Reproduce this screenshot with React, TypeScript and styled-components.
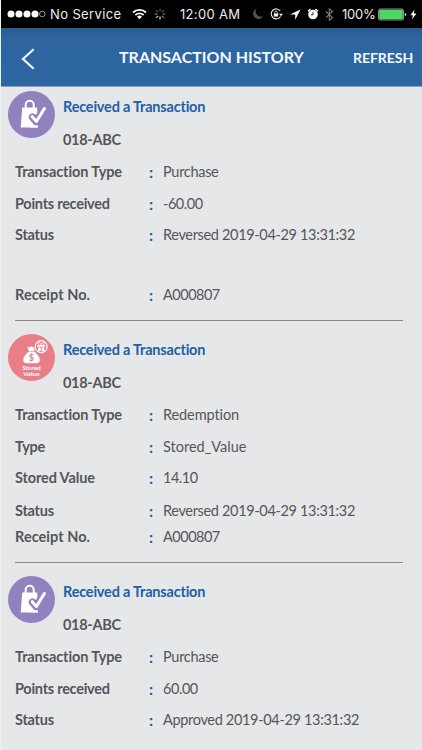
import React from 'react';
import styled, { createGlobalStyle } from 'styled-components';

const Global = createGlobalStyle`
  * { box-sizing: border-box; }
  body { margin: 0; background: #e6e7e9; }
`;

const Screen = styled.div`
  width: 422px;
  height: 750px;
  overflow: hidden;
  display: flex;
  flex-direction: column;
  background: #e6e7e9;
  border-left: 1px solid #eff1f4;
  font-family: Lato, sans-serif;
`;

const StatusBar = styled.div`
  height: 28px;
  flex: none;
  background: #000;
  color: #eee;
  display: flex;
  align-items: center;
  padding: 0 4px 0 6px;
  font: 400 13px/28px Inter, sans-serif;
  svg { display: block; flex: none; }
`;

const StatusText = styled.span<{ $left: number; $track: number; $width: number }>`
  margin-left: ${p => p.$left}px;
  width: ${p => p.$width}px;
  letter-spacing: ${p => p.$track}px;
  white-space: nowrap;
`;

const Glyph = styled.svg<{ $left: number }>`
  margin-left: ${p => p.$left}px;
`;

const NavBar = styled.header`
  height: 59px;
  flex: none;
  display: grid;
  grid-template-columns: 118px 1fr 69px;
  align-items: center;
  color: #f5f9fd;
  background: linear-gradient(#285a8e 0, #2c659f 9px, #2d66a0 100%);
  border-bottom: 1px solid #82a3c6;
`;

const BackButton = styled.button`
  border: 0;
  padding: 4px 0 0 20px;
  background: none;
  display: flex;
`;

const NavTitle = styled.h1`
  margin: 0;
  font-size: 16px;
  line-height: 20px;
  font-weight: 700;
  white-space: nowrap;
`;

const Refresh = styled.span`
  font-size: 14px;
  line-height: 20px;
  font-weight: 700;
  letter-spacing: -0.05px;
  padding-top: 1px;
`;

const List = styled.main`
  flex: 1;
  min-height: 0;
  overflow: hidden;
  padding: 0 19px 0 7px;
`;

const Entry = styled.section<{ $top: number; $height: number }>`
  height: ${p => p.$height}px;
  padding-top: ${p => p.$top}px;
`;

const Rule = styled.hr`
  border: 0;
  height: 1px;
  margin: 0 0 0 7px;
  background: #85878a;
`;

const Head = styled.div`
  display: flex;
  height: 66px;
  gap: 8px;
`;

const HeadText = styled.div`
  display: flex;
  flex-direction: column;
  gap: 13px;
  padding-top: 6px;
`;

const Title = styled.h2`
  margin: 0;
  font-size: 14.5px;
  line-height: 20px;
  font-weight: 700;
  letter-spacing: -0.2px;
  color: #2160a7;
`;

const Code = styled(Title).attrs({ as: 'div' })`
  color: #55565a;
  letter-spacing: -0.3px;
`;

const Row = styled.div<{ $height: number; $gap: number }>`
  display: grid;
  grid-template-columns: 134px 14px 1fr;
  align-items: center;
  height: ${p => p.$height}px;
  margin-top: ${p => p.$gap}px;
  padding-left: 7px;
  font-size: 14.5px;
  line-height: 20px;
  color: #55565a;
  white-space: nowrap;
`;

const Label = styled.span<{ $track: number }>`
  font-weight: 700;
  letter-spacing: ${p => p.$track}px;
`;

const Colon = styled.span`
  font-weight: 700;
  font-size: 16px;
  color: #2160a7;
`;

const Value = styled.span<{ $track: number }>`
  letter-spacing: ${p => p.$track}px;
`;

const BagIcon = () => (
  <svg width="47" height="47" viewBox="0 0 47 47">
    <circle cx="23.5" cy="23.5" r="23.5" fill="#9181bf" />
    <path d="M17.7 18v-4.3a4 4 0 0 1 8 0V18" fill="none" stroke="#fff" strokeWidth="2" />
    <path d="M14.2 16.5h15l.7 20H12.7z" fill="#fff" />
    <path d="M24.6 26.2l3.7 4.2 8-13" fill="none" stroke="#9181bf" strokeWidth="7.6" strokeLinecap="round" strokeLinejoin="round" />
    <path d="M24.2 25.7l4.2 4.8 8-13" fill="none" stroke="#fff" strokeWidth="3" strokeLinecap="round" strokeLinejoin="round" />
    <path d="M22 34.8h7.8v1.7H22z" fill="#fff" />
  </svg>
);

const StoredIcon = () => (
  <svg width="47" height="47" viewBox="0 0 47 47">
    <circle cx="23.5" cy="23.5" r="23.5" fill="#ea7e88" />
    <path d="M19.3 12.8l2.2.8 1.9-1.6 2 1.6 2.2-.8-1.7 4.4h-5z" fill="#fff" />
    <path d="M20.5 17.7h6c2.5 2 5.3 5.4 5.3 8.4 0 2-1.4 3.2-3.8 3.2h-9c-2.4 0-3.8-1.2-3.8-3.2 0-3 2.8-6.4 5.3-8.4z" fill="#fff" />
    <circle cx="33.2" cy="12.6" r="7.2" fill="#ea7e88" />
    <circle cx="33.2" cy="12.6" r="6" fill="none" stroke="#fff" strokeWidth="1.1" />
    <path d="M29.2 11h8v1.7h-8zM30 13.4h2.7v3.8H30zM33.7 13.4h2.7v3.8h-2.7z" fill="#fff" />
    <path d="M33.2 10.8c-1-3.2-3.9-2.4-2.4 0M33.2 10.8c1-3.2 3.9-2.4 2.4 0" fill="none" stroke="#fff" strokeWidth="1" />
    <text x="23.4" y="27" textAnchor="middle" fill="#ea7e88" fontFamily="Lato, sans-serif" fontWeight="700" fontSize="9">$</text>
    <text x="23.4" y="35.8" textAnchor="middle" fill="#fff" fontFamily="Lato, sans-serif" fontWeight="700" fontSize="6.2" textLength="18.5" lengthAdjust="spacingAndGlyphs">Stored</text>
    <text x="23.4" y="41.8" textAnchor="middle" fill="#fff" fontFamily="Lato, sans-serif" fontWeight="700" fontSize="6.2" textLength="16.5" lengthAdjust="spacingAndGlyphs">Value</text>
  </svg>
);

type Field = { label: string; lt: number; value: string; vt: number; height?: number; gap?: number };
type Item = { icon: 'bag' | 'stored'; top: number; height: number; fields: Field[] };

const items: Item[] = [
  {
    icon: 'bag', top: 3.5, height: 233,
    fields: [
      { label: 'Transaction Type', lt: -0.1, value: 'Purchase', vt: -0.3 },
      { label: 'Points received', lt: -0.26, value: '-60.00', vt: -0.48 },
      { label: 'Status', lt: -0.24, value: 'Reversed 2019-04-29 13:31:32', vt: -0.34 },
      { label: 'Receipt No.', lt: 0.04, value: 'A000807', vt: -0.5, gap: 28 },
    ],
  },
  {
    icon: 'stored', top: 12.5, height: 241,
    fields: [
      { label: 'Transaction Type', lt: -0.1, value: 'Redemption', vt: -0.1 },
      { label: 'Type', lt: -0.3, value: 'Stored_Value', vt: 0 },
      { label: 'Stored Value', lt: -0.12, value: '14.10', vt: -0.5 },
      { label: 'Status', lt: -0.24, value: 'Reversed 2019-04-29 13:31:32', vt: -0.34, height: 33 },
      { label: 'Receipt No.', lt: 0.04, value: 'A000807', vt: -0.5, height: 18.5 },
    ],
  },
  {
    icon: 'bag', top: 12.5, height: 190,
    fields: [
      { label: 'Transaction Type', lt: -0.1, value: 'Purchase', vt: -0.3 },
      { label: 'Points received', lt: -0.26, value: '60.00', vt: -0.45 },
      { label: 'Status', lt: -0.24, value: 'Approved 2019-04-29 13:31:32', vt: -0.33 },
    ],
  },
];

const spokes = ['#555', '#666', '#777', '#888', '#eee', '#ccc', '#888', '#555'];

export default function App() {
  return (
    <Screen>
      <Global />
      <StatusBar>
        <Glyph $left={0} width="40" height="10" viewBox="0 0 40 10">
          {[4, 12, 20, 28].map(x => <circle key={x} cx={x} cy="5" r="3.5" fill="#fff" />)}
          <circle cx="35.3" cy="5" r="2.8" fill="none" stroke="#bbb" strokeWidth=".8" />
        </Glyph>
        <StatusText $left={3} $track={0.38} $width={72}>No Service</StatusText>
        <Glyph $left={10} width="15" height="12" viewBox="0 0 15 12">
          <path d="M1 4.5a9.3 9.3 0 0 1 13 0M3.4 7a6 6 0 0 1 8.2 0" fill="none" stroke="#fff" strokeWidth="1.8" />
          <path d="M5 8.7a3.7 3.7 0 0 1 5 0L7.5 11.2z" fill="#fff" />
        </Glyph>
        <Glyph $left={7} width="12" height="12" viewBox="0 0 12 12">
          {spokes.map((c, i) => (
            <path key={i} d="M6 .5v3" stroke={c} strokeWidth="1.1" transform={`rotate(${i * 45} 6 6)`} />
          ))}
        </Glyph>
        <StatusText $left={14} $track={0.32} $width={61}>12:00 AM</StatusText>
        <Glyph $left={11} width="12" height="12" viewBox="0 0 12 12">
          <path d="M4.3.8A5.3 5.3 0 1 0 11.2 8 5.2 5.2 0 0 1 4.3.8z" fill="#555" />
        </Glyph>
        <Glyph $left={6} width="13" height="12" viewBox="0 0 13 12">
          <path d="M10.3 3a5 5 0 1 0 .2 5.5" fill="none" stroke="#eee" strokeWidth="1.1" />
          <path d="M9 5.7h4L11 8.3z" fill="#eee" />
          <path d="M3.8 5.4h4.4v3.2H3.8z" fill="#eee" />
          <path d="M4.7 5.6V4.4a1.3 1.3 0 0 1 2.6 0v1.2" fill="none" stroke="#eee" strokeWidth=".8" />
        </Glyph>
        <Glyph $left={7} width="11" height="11" viewBox="0 0 11 11">
          <path d="M10.5.5L0 5.5h5.2v5.2z" fill="#fff" />
        </Glyph>
        <Glyph $left={6} width="12" height="12" viewBox="0 0 12 12">
          <circle cx="6" cy="6.5" r="4.8" fill="#fff" />
          <path d="M1 3.2L3.5 1M8.5 1L11 3.2" stroke="#fff" strokeWidth="1.4" />
          <path d="M6 3.8v3H3.8" fill="none" stroke="#000" strokeWidth=".8" />
        </Glyph>
        <Glyph $left={6} width="9" height="13" viewBox="0 0 8 13">
          <path d="M.5 3.5l6.5 6-3.2 2.8V.7L7 3.5l-6.5 6" fill="none" stroke="#777" strokeWidth="1.1" />
        </Glyph>
        <StatusText $left={8} $track={-0.25} $width={34}>100%</StatusText>
        <Glyph $left={2} width="29" height="13" viewBox="0 0 29 13">
          <rect x=".5" y="1" width="25" height="11" rx="1.5" fill="#111" stroke="#8a8d8a" />
          <rect x="1.2" y="1.7" width="23.6" height="9.6" rx=".8" fill="#4bd865" />
          <path d="M26.8 4.8q1.4.4 1.4 1.7t-1.4 1.7z" fill="#ddd" />
        </Glyph>
        <Glyph $left={3} width="7" height="11" viewBox="0 0 7 11">
          <path d="M4.5.5L.5 6.2h2.4l-1 4.3 4.6-6H3.8z" fill="#fff" />
        </Glyph>
      </StatusBar>
      <NavBar>
        <BackButton aria-label="Back">
          <svg width="14" height="22" viewBox="0 0 14 22">
            <path d="M12.7 1.3L2 11l10.7 9.7" fill="none" stroke="#eef5fc" strokeWidth="2.2" />
          </svg>
        </BackButton>
        <NavTitle>TRANSACTION HISTORY</NavTitle>
        <Refresh>REFRESH</Refresh>
      </NavBar>
      <List>
        {items.map((item, i) => (
          <React.Fragment key={i}>
            <Entry $top={item.top} $height={item.height}>
              <Head>
                {item.icon === 'bag' ? <BagIcon /> : <StoredIcon />}
                <HeadText>
                  <Title>Received a Transaction</Title>
                  <Code>018-ABC</Code>
                </HeadText>
              </Head>
              {item.fields.map(f => (
                <Row key={f.label} $height={f.height ?? 31.5} $gap={f.gap ?? 0}>
                  <Label $track={f.lt}>{f.label}</Label>
                  <Colon>:</Colon>
                  <Value $track={f.vt}>{f.value}</Value>
                </Row>
              ))}
            </Entry>
            {i < items.length - 1 && <Rule />}
          </React.Fragment>
        ))}
      </List>
    </Screen>
  );
}
